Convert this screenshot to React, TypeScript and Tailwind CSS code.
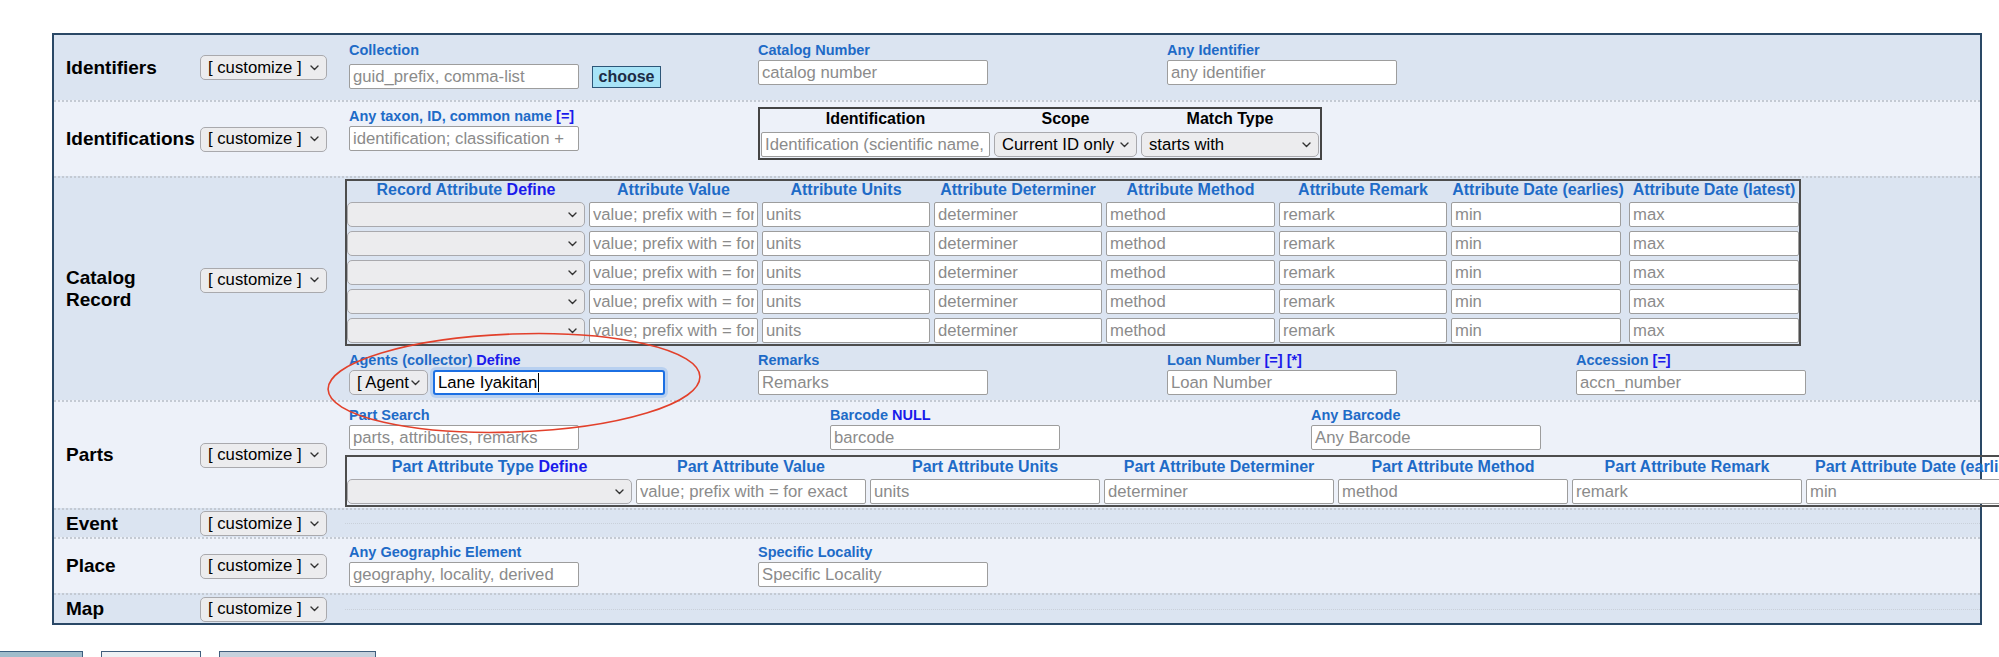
import React from "react";

const BLUE = "text-[#1e6bc7]";

function Chevron() {
  return (
    <svg width="9" height="6" viewBox="0 0 9 6" className="shrink-0">
      <path d="M1 1l3.5 3.5L8 1" fill="none" stroke="#333" strokeWidth="1.4" strokeLinecap="round" strokeLinejoin="round" />
    </svg>
  );
}

function Sel({ text = "", className = "" }: { text?: string; className?: string }) {
  return (
    <div
      className={`flex h-[25px] items-center justify-between overflow-hidden rounded-[5px] border border-[#a9a9ad] bg-[#ececee] pl-[7px] pr-[7px] text-[16.7px] leading-[20px] text-black ${className}`}
    >
      <span className="whitespace-nowrap">{text}</span>
      <Chevron />
    </div>
  );
}

function Input({ ph, className = "w-[230px]" }: { ph: string; className?: string }) {
  return (
    <input
      readOnly
      placeholder={ph}
      className={`h-[25px] rounded-[2px] border border-[#9d9d9d] bg-white px-[3px] text-[16.7px] text-black outline-none placeholder:text-[#8b8b8b] ${className}`}
    />
  );
}

function Label({ children }: { children: React.ReactNode }) {
  return (
    <div className={`h-[16px] whitespace-nowrap text-[14.5px] font-bold leading-[16px] ${BLUE}`}>{children}</div>
  );
}

function Link({ children }: { children: React.ReactNode }) {
  return <span className="text-[#1a1aeb]">{children}</span>;
}

function Field({
  label,
  ph,
  gap = "mt-[2px]",
  children,
}: {
  label: React.ReactNode;
  ph?: string;
  gap?: string;
  children?: React.ReactNode;
}) {
  return (
    <div className="flex flex-col">
      <Label>{label}</Label>
      <div className={`flex items-center ${gap}`}>{children ?? <Input ph={ph ?? ""} />}</div>
    </div>
  );
}

function RowHead({ label, selClass = "" }: { label: React.ReactNode; selClass?: string }) {
  return (
    <>
      <div className="flex w-[146px] shrink-0 items-center pl-[12px] text-[19px] font-bold leading-[22px] text-black">
        {label}
      </div>
      <div className={`flex w-[145px] shrink-0 items-center ${selClass}`}>
        <Sel text="[ customize ]" className="w-[127px]" />
      </div>
    </>
  );
}

const attrHeads: React.ReactNode[] = [
  <>
    Record Attribute <Link>Define</Link>
  </>,
  "Attribute Value",
  "Attribute Units",
  "Attribute Determiner",
  "Attribute Method",
  "Attribute Remark",
  "Attribute Date (earlies)",
  "Attribute Date (latest)",
];
const attrPh = ["value; prefix with = for exact", "units", "determiner", "method", "remark", "min", "max"];
const attrW = ["w-[169px]", "w-[168px]", "w-[168px]", "w-[169px]", "w-[168px]", "w-[170px]", "w-[170px]"];

const partHeads: React.ReactNode[] = [
  <>
    Part Attribute Type <Link>Define</Link>
  </>,
  "Part Attribute Value",
  "Part Attribute Units",
  "Part Attribute Determiner",
  "Part Attribute Method",
  "Part Attribute Remark",
  "Part Attribute Date (earliest)",
  "Part Attribute Date (latest)",
];
const partPh = ["value; prefix with = for exact", "units", "determiner", "method", "remark", "min", "max"];

function AttributeTable() {
  return (
    <div className="grid w-fit grid-cols-[238px_169px_168px_168px_169px_168px_174px_170px] gap-x-[4px] gap-y-[4px] border-2 border-[#4d4d4d] py-[1px]">
      {attrHeads.map((h, i) => (
        <div key={i} className={`h-[16px] whitespace-nowrap text-center text-[16px] font-bold leading-[16px] ${BLUE}`}>
          {h}
        </div>
      ))}
      {[0, 1, 2, 3, 4].map((r) => (
        <React.Fragment key={r}>
          <Sel className="w-[238px]" />
          {attrPh.map((p, i) => (
            <Input key={i} ph={p} className={attrW[i]} />
          ))}
        </React.Fragment>
      ))}
    </div>
  );
}

function PartTable() {
  return (
    <div className="grid w-fit shrink-0 grid-cols-[285px_230px_230px_230px_230px_230px_230px_230px] gap-x-[4px] gap-y-[4px] border-2 border-[#4d4d4d] py-[1px]">
      {partHeads.map((h, i) => (
        <div key={i} className={`h-[17px] whitespace-nowrap text-center text-[16px] font-bold leading-[17px] ${BLUE}`}>
          {h}
        </div>
      ))}
      <Sel className="w-[285px]" />
      {partPh.map((p, i) => (
        <Input key={i} ph={p} className="w-[230px]" />
      ))}
    </div>
  );
}

function IdentTable() {
  return (
    <div className="mt-[5px] grid w-fit grid-cols-[229px_143px_178px] gap-x-[4px] gap-y-[4px] border-2 border-[#444] px-[1px] py-[1px]">
      {["Identification", "Scope", "Match Type"].map((h) => (
        <div key={h} className="h-[18px] text-center text-[16px] font-bold leading-[18px] text-black">
          {h}
        </div>
      ))}
      <Input ph="Identification (scientific name, common name)" className="w-[229px]" />
      <Sel text="Current ID only" className="w-[143px]" />
      <Sel text="starts with" className="w-[178px]" />
    </div>
  );
}

export default function App() {
  return (
    <div className="relative h-[657px] w-full overflow-hidden bg-white font-['Liberation_Sans',Arial,sans-serif]">
      <div className="ml-[52px] mt-[33px] w-[1930px] border-2 border-[#2a4866]">
        {/* Identifiers */}
        <div className="flex h-[65px] bg-[#dbe4f1]">
          <RowHead label="Identifiers" />
          <div className="flex pl-[4px] pt-[7px]">
            <div className="w-[409px]">
              <Field label="Collection" gap="mt-[6px]">
                <Input ph="guid_prefix, comma-list" />
                <div className="ml-[13px] flex h-[22px] w-[69px] items-center justify-center border border-[#2d5678] bg-[#a7e3f7] text-[16px] font-bold text-[#1c2b45]">
                  choose
                </div>
              </Field>
            </div>
            <div className="w-[409px]">
              <Field label="Catalog Number" ph="catalog number" />
            </div>
            <div className="w-[409px]">
              <Field label="Any Identifier" ph="any identifier" />
            </div>
          </div>
        </div>

        {/* Identifications */}
        <div className="flex h-[76px] border-t-2 border-dotted border-[#c4cad3] bg-[#edf1f9]">
          <RowHead label="Identifications" />
          <div className="flex items-start pl-[4px]">
            <div className="w-[409px] pt-[6px]">
              <Field
                label={
                  <>
                    Any taxon, ID, common name <Link>[=]</Link>
                  </>
                }
                ph="identification; classification +"
              />
            </div>
            <IdentTable />
          </div>
        </div>

        {/* Catalog Record */}
        <div className="flex h-[224px] border-t-2 border-dotted border-[#c4cad3] bg-[#dbe4f1]">
          <RowHead
            label={
              <span>
                Catalog
                <br />
                Record
              </span>
            }
            selClass="pb-[18px]"
          />
          <div className="flex flex-col pt-[1px]">
            <AttributeTable />
            <div className="mt-[6px] flex pl-[4px]">
              <div className="w-[409px]">
                <Field
                  label={
                    <>
                      Agents (collector) <Link>Define</Link>
                    </>
                  }
                >
                  <Sel text="[ Agent" className="w-[79px]" />
                  <div className="ml-[5px] flex h-[25px] w-[232px] items-center rounded-[3px] border-2 border-[#1b6fe3] bg-white pl-[3px] text-[16.7px] text-black ring-[3px] ring-[#a9c8f0]/70">
                    <span>Lane Iyakitan</span>
                    <span className="ml-[1px] h-[19px] w-px bg-black" />
                  </div>
                </Field>
              </div>
              <div className="w-[409px]">
                <Field label="Remarks" ph="Remarks" />
              </div>
              <div className="w-[409px]">
                <Field
                  label={
                    <>
                      Loan Number <Link>[=] [*]</Link>
                    </>
                  }
                  ph="Loan Number"
                />
              </div>
              <div className="w-[409px]">
                <Field
                  label={
                    <>
                      Accession <Link>[=]</Link>
                    </>
                  }
                  ph="accn_number"
                />
              </div>
            </div>
          </div>
        </div>

        {/* Parts */}
        <div className="flex h-[108px] border-t-2 border-dotted border-[#c4cad3] bg-[#edf1f9]">
          <RowHead label="Parts" />
          <div className="flex flex-col pt-[5px]">
            <div className="flex pl-[4px]">
              <div className="w-[481px]">
                <Field label="Part Search" ph="parts, attributes, remarks" />
              </div>
              <div className="w-[481px]">
                <Field
                  label={
                    <>
                      Barcode <Link>NULL</Link>
                    </>
                  }
                  ph="barcode"
                />
              </div>
              <div className="w-[481px]">
                <Field label="Any Barcode" ph="Any Barcode" />
              </div>
            </div>
            <div className="mt-[5px]">
              <PartTable />
            </div>
          </div>
        </div>

        {/* Event */}
        <div className="flex h-[29px] border-t-2 border-dotted border-[#c4cad3] bg-[#dbe4f1]">
          <RowHead label="Event" />
          <div className="flex flex-1 items-center">
            <div className="w-full border-t border-dotted border-[#c9d0da]" />
          </div>
        </div>

        {/* Place */}
        <div className="flex h-[56px] border-t-2 border-dotted border-[#c4cad3] bg-[#edf1f9]">
          <RowHead label="Place" />
          <div className="flex pl-[4px] pt-[5px]">
            <div className="w-[409px]">
              <Field label="Any Geographic Element" ph="geography, locality, derived" />
            </div>
            <div className="w-[409px]">
              <Field label="Specific Locality" ph="Specific Locality" />
            </div>
          </div>
        </div>

        {/* Map */}
        <div className="flex h-[30px] border-t-2 border-dotted border-[#c4cad3] bg-[#dbe4f1]">
          <RowHead label="Map" />
          <div className="flex flex-1 items-center">
            <div className="w-full border-t border-dotted border-[#c9d0da]" />
          </div>
        </div>
      </div>

      {/* bottom buttons */}
      <div className="mt-[26px] flex">
        <div className="h-[30px] w-[83px] border border-l-0 border-[#3d5f80] bg-[#a0bccb]" />
        <div className="ml-[18px] h-[30px] w-[100px] border border-[#415f7e] bg-[#eef1f4]" />
        <div className="ml-[18px] h-[30px] w-[157px] border border-[#415f7e] bg-[#c6d1dd]" />
      </div>

      {/* red annotation ellipse */}
      <svg className="pointer-events-none absolute left-[322px] top-[328px]" width="384" height="110" viewBox="0 0 384 110">
        <ellipse cx="192" cy="55" rx="186" ry="49" fill="none" stroke="#e2402b" strokeWidth="1.6" transform="rotate(-2 192 55)" />
      </svg>
    </div>
  );
}
